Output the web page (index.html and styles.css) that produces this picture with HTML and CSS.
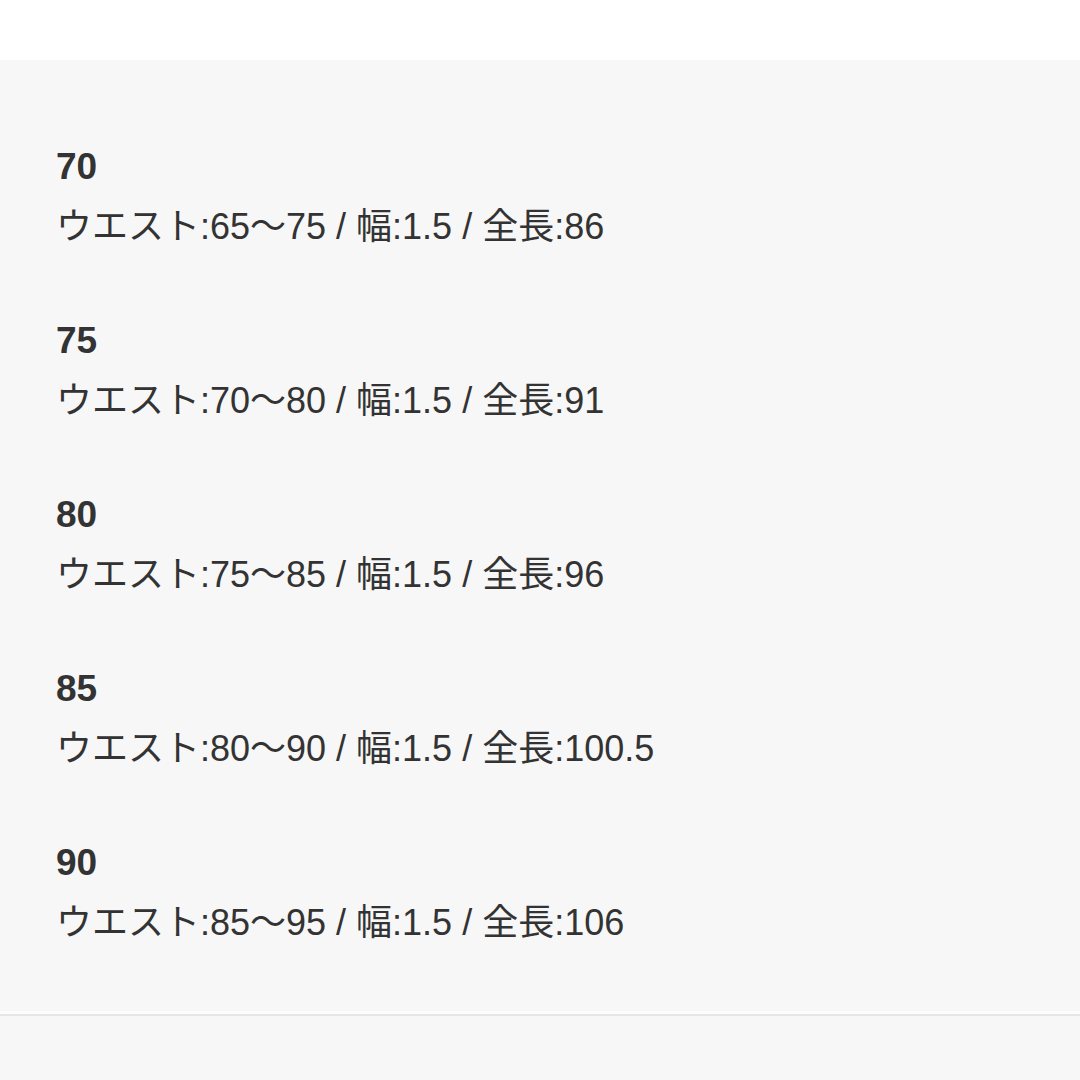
FILE: index.html
```html
<!DOCTYPE html>
<html lang="ja">
<head>
<meta charset="utf-8">
<title>サイズ</title>
<link rel="stylesheet" href="styles.css">
</head>
<body>
<header class="topbar"></header>
<section class="sizes">
  <div class="size">
    <div class="size-name">70</div>
    <div class="size-detail">ウエスト:65～75 / 幅:1.5 / 全長:86</div>
  </div>
  <div class="size">
    <div class="size-name">75</div>
    <div class="size-detail">ウエスト:70～80 / 幅:1.5 / 全長:91</div>
  </div>
  <div class="size">
    <div class="size-name">80</div>
    <div class="size-detail">ウエスト:75～85 / 幅:1.5 / 全長:96</div>
  </div>
  <div class="size">
    <div class="size-name">85</div>
    <div class="size-detail">ウエスト:80～90 / 幅:1.5 / 全長:100.5</div>
  </div>
  <div class="size">
    <div class="size-name">90</div>
    <div class="size-detail">ウエスト:85～95 / 幅:1.5 / 全長:106</div>
  </div>
</section>
<footer class="bottom"></footer>
</body>
</html>
```
FILE: styles.css
```css
html, body {
  margin: 0;
  padding: 0;
}
body {
  background: #f7f7f7;
  font-family: "Liberation Sans", "Noto Sans CJK JP", sans-serif;
  color: #333333;
  width: 1080px;
  height: 1080px;
  overflow: hidden;
}
.topbar {
  height: 60px;
  background: #ffffff;
}
.sizes {
  display: flex;
  flex-direction: column;
  gap: 54px;
  padding: 77px 56px 0 56px;
  height: 954px;
  box-sizing: border-box;
  background: #f7f7f7;
  border-bottom: 3px solid #fcfcfc;
}
.size {
  display: flex;
  flex-direction: column;
}
.size-name,
.size-detail {
  font-size: 36px;
  line-height: 60px;
  height: 60px;
  white-space: nowrap;
}
.size-name {
  font-size: 37px;
  font-weight: 700;
}
.bottom {
  height: 66px;
  border-top: 2px solid #e6e6e6;
  background: #f7f7f7;
}
```
